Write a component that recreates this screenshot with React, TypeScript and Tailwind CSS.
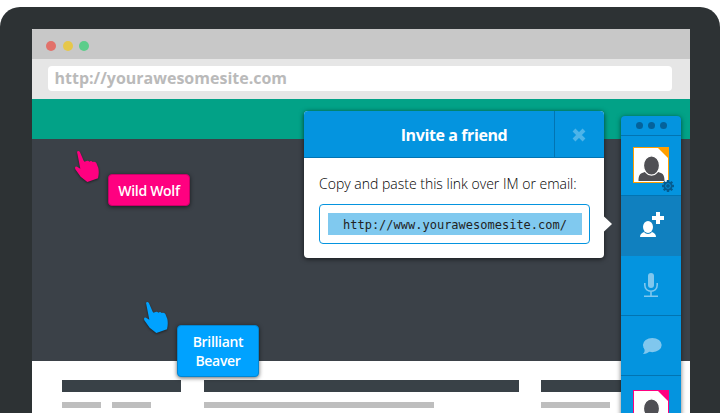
import React from "react";

function Hand({ color }: { color: string }) {
  return (
    <svg width="26" height="33" viewBox="42 30 78 99" overflow="visible" className="block drop-shadow-[0_1px_1px_rgba(0,0,0,0.5)]">
      <path
        fill={color}
        d="M51 35 Q56 30 60 37 L71 62 Q74 67 77 64 Q84 60 88 65 Q94 61 98 66 Q105 64 109 69 L115 84 Q118 98 114 115 L82 126 L62 110 L46 88 Q43 78 51 80 L61 86 Z"
      />
    </svg>
  );
}

function Avatar({ color }: { color: string }) {
  return (
    <svg width="36" height="36" viewBox="0 0 36 36" className="block">
      <rect x="0.5" y="0.5" width="35" height="35" fill="#fff" stroke={color} />
      <path d="M25 1h10v10z" fill={color} />
      <path d="M5.500 34c0-5 1-7.500 5-8.500l4-1.500h8l4 1.500c4 1 5 3.500 5 8.500z" fill="#4f4f54" />
      <ellipse cx="18.500" cy="18.500" rx="8" ry="9.700" fill="#4f4f54" stroke="#fff" strokeWidth="1.200" />
    </svg>
  );
}

function Gear() {
  return (
    <svg width="12" height="12" viewBox="-6 -6 12 12" className="block">
      <g fill="#065b8e">
        {[0, 45, 90, 135].map((a) => (
          <rect key={a} x="-1.200" y="-6" width="2.400" height="12" transform={`rotate(${a})`} />
        ))}
        <circle r="4.500" />
      </g>
      <circle r="2.400" fill="none" stroke="#0590da" strokeWidth="0.900" />
    </svg>
  );
}

function Sidebar() {
  return (
    <div className="absolute left-[621px] top-[116px] flex h-[320px] w-[60px] flex-col rounded-t bg-[#0494df] shadow-[0_1px_5px_rgba(0,0,0,0.55)]">
      <div className="flex h-5 items-center justify-center gap-[5px] border-b border-[#0274b2]">
        <span className="size-[7px] rounded-full bg-[#04629a]" />
        <span className="size-[7px] rounded-full bg-[#04629a]" />
        <span className="size-[7px] rounded-full bg-[#04629a]" />
      </div>
      <div className="relative flex h-[60px] justify-center border-b border-[#0274b2] pt-[11px]">
        <Avatar color="#ff9f00" />
        <div className="absolute left-[41px] top-[44px]"><Gear /></div>
      </div>
      <div className="h-[60px] bg-[#1080bf] pl-[19px] pt-4">
        <svg width="24" height="25" viewBox="0 0 24 25" fill="#fff">
          <path d="M16 0h4v4h4v4h-4v4h-4V8h-4V4h4z" />
          <ellipse cx="8" cy="15" rx="5" ry="6" />
          <path d="M0 25c0-3 2-4.300 4-5 2 2.500 6 2.500 8 0 2 .7 4 2 4 5z" />
        </svg>
      </div>
      <div className="h-[60px] border-b border-[#0274b2] pl-[22px] pt-[17px]">
        <svg width="16" height="25" viewBox="0 0 16 25" fill="#80c7ee">
          <rect x="5" y="0" width="6" height="15" rx="3" />
          <path d="M1.800 10v2c0 8.300 12.400 8.300 12.400 0v-2M8 18v5M1 23.200h14" fill="none" stroke="#80c7ee" strokeWidth="1.600" />
        </svg>
      </div>
      <div className="h-[60px] border-b border-[#0274b2] pl-[21px] pt-[22px]">
        <svg width="20" height="17" viewBox="0 0 20 17" fill="#80c7ee">
          <ellipse cx="10.300" cy="7.100" rx="9.400" ry="7.100" />
          <path d="M1.500 9c2 4 1 5-.5 7 3 0 5-1 7-3z" />
        </svg>
      </div>
      <div className="flex justify-center pt-[14px]">
        <Avatar color="#ff0080" />
      </div>
    </div>
  );
}

function InvitePopup() {
  return (
    <div className="absolute left-[304px] top-[111px] h-[147px] w-[300px] rounded bg-white shadow-[0_1px_5px_rgba(0,0,0,0.65)]">
      <div className="flex h-[47px] rounded-t border-b border-[#0274b2] bg-[#0494df]">
        <h1 className="w-[250px] pl-[50px] text-center text-[16px] font-bold leading-[48px] tracking-[-0.4px] text-white">Invite a friend</h1>
        <button aria-label="Close" className="flex flex-1 items-center justify-center border-l border-[#0274b2] pr-0.5">
          <svg width="14" height="14" viewBox="0 0 14 14" className="mt-0.5">
            <path d="M2 2l10 10M12 2L2 12" stroke="#4db4e9" strokeWidth="4" />
          </svg>
        </button>
      </div>
      <p className="whitespace-nowrap pl-[15px] pt-[15px] text-[14px] font-light leading-[22px] text-black">Copy and paste this link over IM or email:</p>
      <div className="ml-[15px] mt-[9px] h-10 w-[271px] rounded border border-[#0494df] px-2 py-2">
        <div className="h-[22px] w-[254px] bg-[#80c9ef] pl-[15px] font-['DejaVu_Sans_Mono',monospace] text-[12px] leading-[24px] text-[#222]">http://www.yourawesomesite.com/</div>
      </div>
      <svg width="8" height="16" viewBox="0 0 8 16" className="absolute left-[300px] top-[105px]">
        <path d="M0 0.500L8 8L0 15.500z" fill="#fff" />
      </svg>
    </div>
  );
}

export default function App() {
  return (
    <div className="relative h-[413px] w-[720px] overflow-hidden bg-white pt-[7px] font-['Open_Sans',sans-serif]">
      <div className="h-[430px] rounded-t-[20px] bg-[#2d3234] pl-8 pr-[30px] pt-[22px]">
        <div className="flex h-[401px] flex-col bg-white">
          <div className="flex h-[30px] items-center gap-[6.500px] rounded-tl-[1px] bg-[#c8c8c8] pl-[14px] pt-[3px]">
            <span className="size-[10px] rounded-full bg-[#e2716a]" />
            <span className="size-[10px] rounded-full bg-[#e6c74a]" />
            <span className="size-[10px] rounded-full bg-[#5dcd8a]" />
          </div>
          <div className="h-10 bg-[#e6e6e6] pl-4 pr-[18px] pt-[7px]">
            <div className="h-[25px] rounded bg-white pl-[6.500px] text-[16px] font-bold leading-[25px] text-[#bababa]">http://yourawesomesite.com</div>
          </div>
          <div className="h-10 bg-[#02a287]" />
          <div className="h-[222px] bg-[#3b4148]" />
          <div className="flex pl-[30px] pt-[19px]">
            <div className="mr-[23px] w-[119px]">
              <div className="h-3 bg-[#394147]" />
              <div className="mt-[10px] flex gap-[11px]">
                <div className="h-1.5 w-[39px] bg-[#bebebe]" />
                <div className="h-1.5 w-[39px] bg-[#bebebe]" />
              </div>
            </div>
            <div className="mr-[22px] w-[315px]">
              <div className="h-3 bg-[#394147]" />
              <div className="mt-[10px] h-1.5 w-[230px] bg-[#bebebe]" />
            </div>
            <div className="w-[119px]">
              <div className="h-3 bg-[#394147]" />
              <div className="mt-[10px] h-1.5 w-[69px] bg-[#bebebe]" />
            </div>
          </div>
        </div>
      </div>

      <div className="absolute left-[74px] top-[150px]"><Hand color="#ff0080" /></div>
      <div className="absolute left-[108px] top-[174px] flex h-8 w-[82px] items-center justify-center rounded border border-[#c90068] bg-[#ff0080] text-[14px] font-semibold tracking-[-0.3px] text-white shadow-[0_1px_4px_rgba(0,0,0,0.6)]">Wild Wolf</div>

      <div className="absolute left-[143px] top-[301px]"><Hand color="#00a2ff" /></div>
      <div className="absolute left-[177px] top-[325px] flex h-[52px] w-[82px] items-center justify-center rounded border border-[#0286d2] bg-[#00a2ff] text-center text-[14px] font-semibold leading-[19px] tracking-[-0.3px] text-white shadow-[0_1px_4px_rgba(0,0,0,0.6)]">Brilliant<br />Beaver</div>

      <InvitePopup />
      <Sidebar />
    </div>
  );
}
